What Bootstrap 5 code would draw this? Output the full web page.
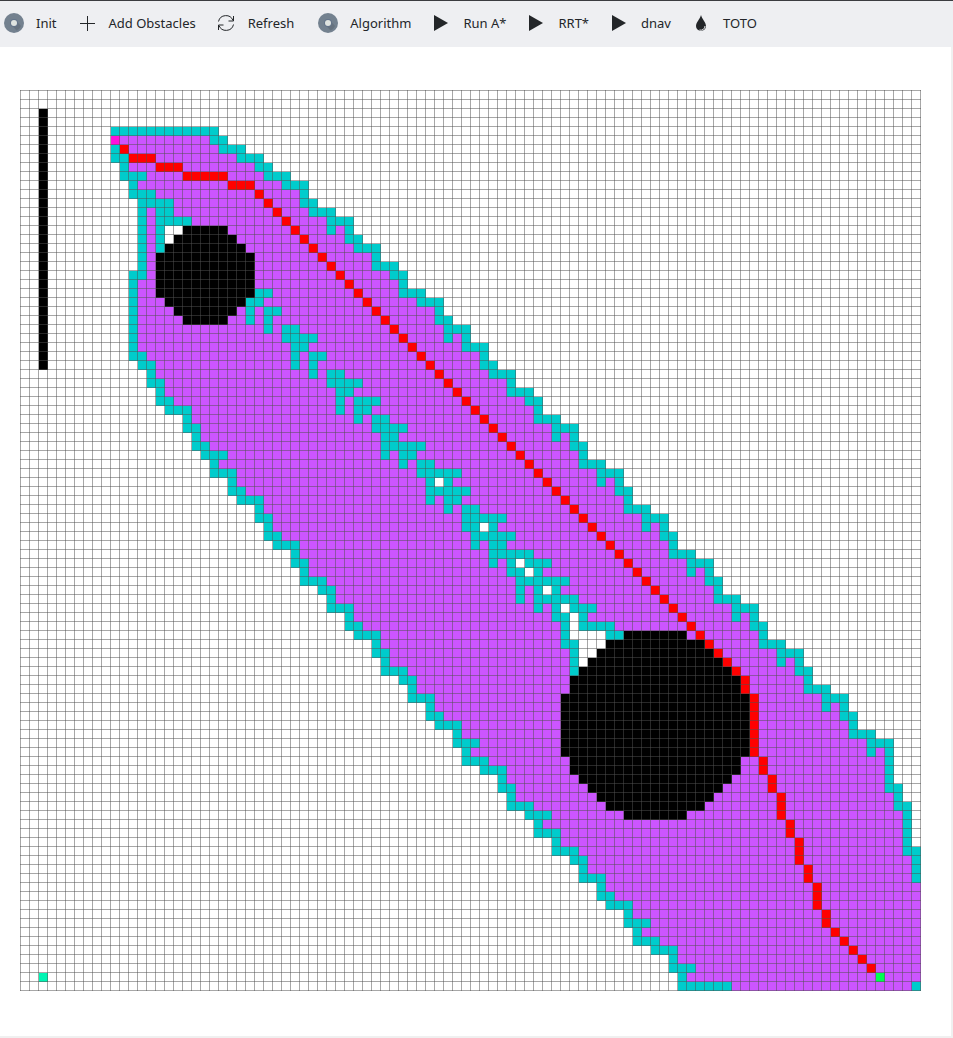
<!DOCTYPE html>
<html lang="en">
<head>
<meta charset="utf-8">
<meta name="viewport" content="width=device-width, initial-scale=1">
<title>Path planner</title>
<link href="https://cdn.jsdelivr.net/npm/bootstrap@5.3.0/dist/css/bootstrap.min.css" rel="stylesheet">
<style>
  body { background: #f0f0f0; font-family: "Noto Sans", sans-serif; color: #232629; }
  .toolbar { background: #eeeff2; border-top: 1px solid #3b3c40; padding: 11px 3px 13px; column-gap: 19px; }
  .tool { --bs-btn-padding-x: 0; --bs-btn-padding-y: 0; --bs-btn-border-width: 0; --bs-btn-color: #232629;
    --bs-btn-font-size: 13px; --bs-btn-line-height: 22px; column-gap: 11px; }
  .tool svg { width: 22px; height: 22px; flex: none; }
  .stage { margin: 0 2px 2px 0; padding: 43px 30px 43px 20px; }
  .grid-lines { stroke: #505050; stroke-opacity: .5; fill: none; }
  .visited { fill: #cc55ff; }
  .frontier { fill: #00cccc; }
  .unseen { fill: #ffffff; }
  .obstacle { fill: #000000; }
  .route { fill: #ff0000; }
  .start { fill: #ff10dc; }
  .goal { fill: #00ff50; }
  .robot { fill: #00f5b4; }
</style>
</head>
<body class="d-flex flex-column min-vh-100">
<svg class="d-none" aria-hidden="true">
  <symbol id="i-disc" viewBox="0 0 22 22">
    <circle cx="11" cy="11" r="10" fill="#73818f"/>
    <path d="M13.2 8.8 18 14a8 8 0 0 1-4.500 4.500L9 13.500z" fill="#66727f"/>
    <circle cx="11" cy="11" r="4" fill="#64748a"/>
    <circle cx="11" cy="11" r="3" fill="#dfe3e0"/>
  </symbol>
  <symbol id="i-play" viewBox="0 0 22 22"><path d="M4 3v16l14-8z" fill="#232629"/></symbol>
</svg>

<nav class="toolbar d-flex flex-wrap" aria-label="Main toolbar">
  <button type="button" class="tool btn d-flex align-items-center"><svg aria-hidden="true"><use href="#i-disc"/></svg>Init</button>
  <button type="button" class="tool btn d-flex align-items-center"><svg viewBox="0 0 22 22" aria-hidden="true"><path d="M11 4v15M3.500 11.500h15" stroke="#232629" fill="none" shape-rendering="crispEdges"/></svg>Add Obstacles</button>
  <button type="button" class="tool btn d-flex align-items-center me-1"><svg viewBox="0 0 22 22" aria-hidden="true"><path d="M3.500 9.500A7.600 7.600 0 0 1 18 8.500M18.500 4v5h-5M18.500 12.500A7.600 7.600 0 0 1 4 13.500M3.500 18v-5h5" stroke="#232629" fill="none"/></svg>Refresh</button>
  <button type="button" class="tool btn d-flex align-items-center"><svg aria-hidden="true"><use href="#i-disc"/></svg>Algorithm</button>
  <button type="button" class="tool btn d-flex align-items-center"><svg aria-hidden="true"><use href="#i-play"/></svg>Run A*</button>
  <button type="button" class="tool btn d-flex align-items-center"><svg aria-hidden="true"><use href="#i-play"/></svg>RRT*</button>
  <button type="button" class="tool btn d-flex align-items-center"><svg aria-hidden="true"><use href="#i-play"/></svg>dnav</button>
  <button type="button" class="tool btn d-flex align-items-center"><svg viewBox="0 0 22 22" aria-hidden="true"><path d="M11 3C10 7 6 10.500 6 14a5 5 0 0 0 10 0C16 10.500 12 7 11 3z" fill="#232629"/><path d="M15 14a4.200 4.200 0 0 1-5.500 4" stroke="#eeeff2" fill="none"/></svg>TOTO</button>
</nav>

<main class="stage bg-white flex-grow-1">
  <svg id="board" class="d-block w-100" viewBox="0 0 901 901" role="img" aria-label="Search grid"></svg>
</main>

<script src="https://cdn.jsdelivr.net/npm/bootstrap@5.3.0/dist/js/bootstrap.bundle.min.js"></script>
<script>
  const CELL = 9, SIZE = 100;

  // One line per grid row from row 4 down; each token is a column or a first-last run.
  const frontier = `10-21
21-22
10 22-24
10-11 24-26
11 26-27
11-13 27-29
12 29-31
12-14 31
13-16 31-32
13 15-16 32-34
13 15-18 34-36
13 15 34 36
13 15 36-37
13 15 37-39
13 39
13 39-41
12-13 41-42
12 42
12 26-27 42-44
12 25-26 44-46
12 25 27-28 46
12 25 27 46-47
12 27 29-30 47-49
12 29-32 47 49
12 30-31 49-51
12-13 30 32-33 51
13-14 30 32 51-52
14 32 34-35 52-54
14-15 34-37 54
15 35-36 54-56
15-16 35 37-39 56-57
16-18 35 37-38 57
18 37 39-40 57-59
18-19 39-42 59-61
19 40-41 59 61
19-20 40-44 61-62
20-22 40 42-43 62
21 42 44-45 62-64
21-23 44-48 64-66
23 45 47 64 66
23-24 45-49 66-67
24-26 45 47-48 67
26 47 49-50 67-69
26-27 49-53 69-71
27 49-50 52 69 71
27-28 50-54 71-72
28-30 50 52-53 72
30 52-56 72-74
30-31 52 54 56-58 74-76
31 54-55 57 74 76
31-33 55-60 76-77
33-34 55 57 59 77
34 55 57-61 77-79
34-36 57 59 61-63 79-81
36 59-60 62 79 81
36-37 60 62-65 81-82
37-39 60 65-66 82
39 60-61 82-84
39-40 61 84-86
40 61 84 86
40-42 61 86-87
42-43 87
43 87-89
43-45 89-91
45 89 91
45-46 91-92
46-48 92
48 92-94
48-50 94-96
49 94 96
49-51 96
51-53 96
53 96
53-54 96-97
54 97
54-56 97-98
56-58 98
57 98
57-59 98
59 98
59-61 98-99
61-62 99
62 99
62-64 99
64
64-65
65-67
67
67-69
68
68-70
70-72
72
72-74
73
73-78 99`.split("\n");

  // "row:first-last" runs, rows may be ranges too
  const unseen = "15:16-17 16:16 43:46 48:51 52:55 53:56 55:58 57:60 58-59:61 60:61-64 61:62-64 62:62-63 63:62";
  const obstacles = "2-30:2 15:18-22 16:17-23 17:16-24 18-22:15-25 23:16-24 24:17-23 25:18-22 " +
    "60:67-73 61:65-75 62:64-76 63:63-77 64:62-78 65-66:61-79 67-73:60-80 74-75:61-79 " +
    "76:62-78 77:63-77 78:64-76 79:65-75 80:67-73";
  let route = "6:11 7:12-14 8:15-17 9:18-22 10:23-25";
  for (let r = 11; r <= 64; r++) route += ` ${r}:${r + 15}`;
  route += " 65-66:80 67-73:81 74-75:82 76-77:83 78-80:84 81-82:85 83-85:86 86-87:87 88-90:88 91-92:89" +
    " 93:90 94:91 95:92 96:93 97:94";

  const span = t => { const [a, b = a] = t.split("-").map(Number); return [a, b]; };
  // A cell's fill begins just inside its top and left grid lines.
  const box = run => {
    const [[r1, r2], [c1, c2]] = run.split(":").map(span);
    const w = (c2 - c1 + 1) * CELL;
    return `M${c1 * CELL + 1} ${r1 * CELL + 1}h${w}v${(r2 - r1 + 1) * CELL}h${-w}z`;
  };
  const layer = (cls, runs) => `<path class="${cls}" d="${runs.split(" ").map(box).join("")}"/>`;

  const edge = [], visited = [];
  frontier.forEach((line, i) => {
    const r = i + 4, runs = line.split(" ");
    runs.forEach(t => edge.push(`${r}:${t}`));
    const first = r === 5 ? 10 : span(runs[0])[0];
    const last = r >= 88 ? SIZE - 1 : span(runs[runs.length - 1])[1];
    visited.push(`${r}:${first}-${last}`);
  });

  let across = "", down = "";
  for (let i = 0; i <= SIZE; i++) {
    across += `M0 ${i * CELL + .5}h901`;
    down += `M${i * CELL + .5} 0v901`;
  }

  document.getElementById("board").innerHTML =
    `<g shape-rendering="crispEdges">` +
    layer("visited", visited.join(" ")) + layer("frontier", edge.join(" ")) +
    layer("unseen", unseen) + layer("obstacle", obstacles) + layer("route", route) +
    layer("start", "5:10") + layer("goal", "98:95") + layer("robot", "98:2") +
    `<path class="grid-lines" d="${across}"/><path class="grid-lines" d="${down}"/></g>`;
</script>
</body>
</html>
